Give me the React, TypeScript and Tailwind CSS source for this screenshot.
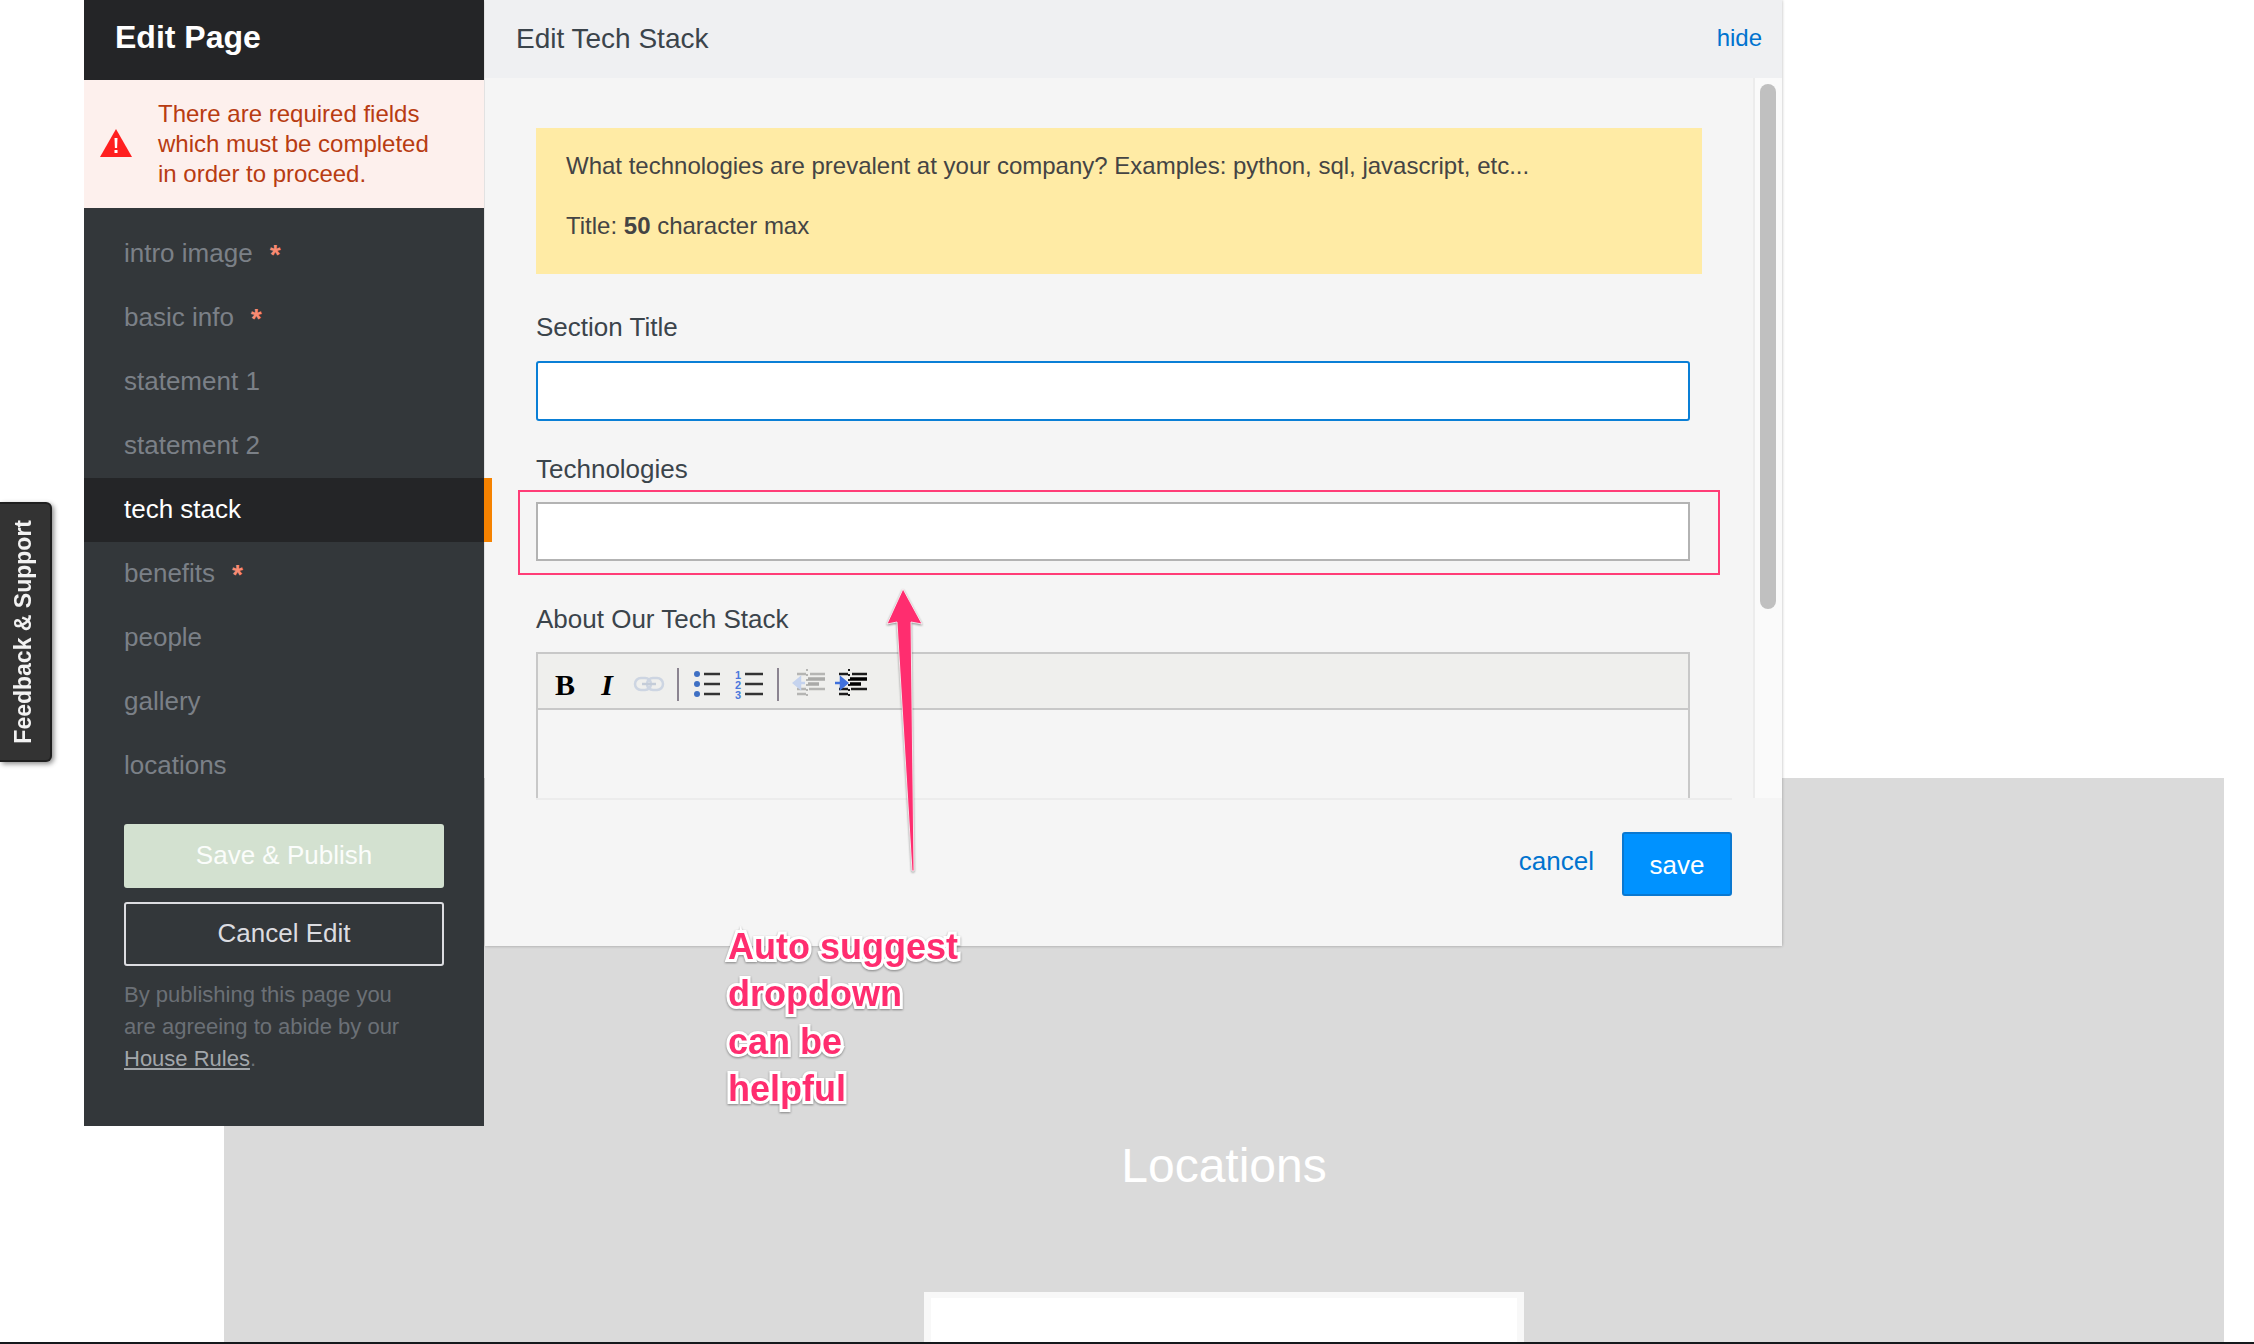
const navItems = [
  { label: "intro image", required: true },
  { label: "basic info", required: true },
  { label: "statement 1" },
  { label: "statement 2" },
  { label: "tech stack", active: true },
  { label: "benefits", required: true },
  { label: "people" },
  { label: "gallery" },
  { label: "locations" },
];

function LinkIcon() {
  return (
    <svg width="32" height="16" viewBox="0 0 32 16" fill="none" stroke="#cdd5e2" strokeWidth="2.5">
      <rect x="2" y="2" width="16" height="12" rx="6" />
      <rect x="14" y="2" width="16" height="12" rx="6" />
      <path d="M9 8h14" stroke="#c4ccd8" />
    </svg>
  );
}

function BulletIcon() {
  return (
    <svg width="28" height="30" viewBox="0 0 28 30">
      {[5, 15, 25].map((y) => (
        <g key={y}>
          <circle cx="4" cy={y} r="3" fill="#3f70c4" />
          <path d={`M11 ${y}h16`} stroke="#333" strokeWidth="2.5" />
        </g>
      ))}
    </svg>
  );
}

function NumberIcon() {
  return (
    <svg width="30" height="32" viewBox="0 0 30 32">
      {[1, 2, 3].map((n) => (
        <g key={n}>
          <text x="1" y={n * 10 + 1} fontSize="11" fontWeight="700" fontFamily="Liberation Sans" fill="#4a78dc">
            {n}
          </text>
          <path d={`M11 ${n * 10 - 4}h18`} stroke="#333" strokeWidth="2.5" />
        </g>
      ))}
    </svg>
  );
}

function IndentIcon({ outdent }: { outdent?: boolean }) {
  const dark = outdent ? "#b5b5b3" : "#1c1c1c";
  const thick = outdent ? "#aaaaa8" : "#000000";
  const arrow = outdent ? "#c5d3ee" : "#3f70dc";
  return (
    <svg width="34" height="32" viewBox="0 0 34 32">
      <path d="M15 1v30" stroke={dark} strokeWidth="2" strokeDasharray="2 3" />
      <path d="M5 6h9M18 6h15M5 26h9M5 21h9" stroke={dark} strokeWidth="2.5" />
      <path d="M16 11h17M16 16h11" stroke={thick} strokeWidth="3.5" />
      <path d="M17 21h16" stroke={dark} strokeWidth="2.5" />
      {outdent ? (
        <path d="M13 15H4M8 10l-6 5 6 5z" stroke={arrow} strokeWidth="2.5" fill={arrow} />
      ) : (
        <path d="M1 15h8M7 10l6 5-6 5z" stroke={arrow} strokeWidth="2.5" fill={arrow} />
      )}
    </svg>
  );
}

function ToolbarSeparator() {
  return (
    <div className="flex w-[16px] justify-center pt-[6px]">
      <div className="h-[33px] w-[2px] bg-[#8b8490]" />
    </div>
  );
}

function Toolbar() {
  const cell = "flex h-[54px] w-[42px] items-center justify-center pt-[6px]";
  return (
    <div className="flex h-[56px] items-center border-b-2 border-[#c8c8c8] bg-[#efefed] pl-[6px]">
      <div className={`${cell} font-['Liberation_Serif',serif] text-[30px] font-bold text-black`}>B</div>
      <div className={`${cell} font-['Liberation_Serif',serif] text-[30px] font-bold text-black italic`}>I</div>
      <div className={cell}>
        <LinkIcon />
      </div>
      <ToolbarSeparator />
      <div className={cell}>
        <BulletIcon />
      </div>
      <div className={cell}>
        <NumberIcon />
      </div>
      <ToolbarSeparator />
      <div className={`${cell} ml-[2px]`}>
        <IndentIcon outdent />
      </div>
      <div className={cell}>
        <IndentIcon />
      </div>
    </div>
  );
}

function Sidebar() {
  return (
    <aside className="absolute top-0 left-[84px] z-20 h-[1126px] w-[400px] bg-[#33373a]">
      <div className="flex h-[80px] items-center bg-[#242527] pb-[6px] pl-[31px] text-[32px] font-bold text-white">
        Edit Page
      </div>
      <div className="flex h-[128px] items-center bg-[#fdf0ed] pl-[16px]">
        <svg width="32" height="28" viewBox="0 0 32 28" className="-mt-[3px] shrink-0">
          <path d="M16 0l16 28H0z" fill="#ff2020" />
          <path d="M14.5 9h3l-.4 10h-2.2zM14.5 21h3v3h-3z" fill="#fff" />
        </svg>
        <p className="ml-[26px] text-[24px] leading-[30px] text-[#b83c12]">
          There are required fields
          <br />
          which must be completed
          <br />
          in order to proceed.
        </p>
      </div>
      <nav className="pt-[14px]">
        {navItems.map((item) => (
          <div
            key={item.label}
            className={`relative flex h-[64px] items-center pb-[2px] pl-[40px] text-[26px] ${
              item.active ? "bg-[#242527] text-white" : "text-[#7b8087]"
            }`}
          >
            {item.label}
            {item.required && (
              <span className="-mt-[3px] ml-[17px] h-[22px] text-[28px] leading-[28px] font-bold text-[#f98a72]">*</span>
            )}
            {item.active && <div className="absolute top-0 -right-[8px] h-full w-[8px] bg-[#f58200]" />}
          </div>
        ))}
      </nav>
      <div className="mt-[26px] px-[40px]">
        <button className="flex h-[64px] w-[320px] items-center justify-center rounded-[3px] bg-[#d3e1d0] pb-[2px] text-[26px] text-[#fbfdfb]">
          Save &amp; Publish
        </button>
        <button className="mt-[14px] flex h-[64px] w-[320px] items-center justify-center rounded-[3px] border-2 border-[#dcdce0] pb-[2px] text-[26px] text-[#dcdce0]">
          Cancel Edit
        </button>
        <p className="mt-[13px] text-[22px] leading-[32px] text-[#6b7076]">
          By publishing this page you
          <br />
          are agreeing to abide by our
          <br />
          <span className="text-[#a2a6aa] underline">House Rules</span>.
        </p>
      </div>
    </aside>
  );
}

function Modal() {
  const label = "text-[26px] leading-[30px] text-[#3b444b]";
  return (
    <section className="absolute top-0 left-[485px] z-10 flex h-[946px] w-[1297px] flex-col bg-[#f5f5f5] shadow-[0_0_3px_rgba(0,0,0,0.3)]">
      <header className="flex h-[78px] shrink-0 items-center justify-between bg-[#eff0f2] pr-[20px] pl-[31px]">
        <h2 className="text-[28px] text-[#3b444b]">Edit Tech Stack</h2>
        <a className="pb-[2px] text-[24px] text-[#0073cf]">hide</a>
      </header>

      <div className="flex h-[720px] shrink-0">
        <div className="w-[1268px] overflow-hidden pl-[51px]">
          <div className="mt-[50px] h-[146px] w-[1166px] bg-[#ffeba5] pt-[23px] pl-[30px] text-[24px] leading-[30px] text-[#444444]">
            <p>What technologies are prevalent at your company? Examples: python, sql, javascript, etc...</p>
            <p className="mt-[30px]">
              Title: <b>50</b> character max
            </p>
          </div>

          <div className={`mt-[38px] ${label}`}>Section Title</div>
          <input className="mt-[19px] block h-[60px] w-[1154px] rounded-[3px] border-2 border-[#0a7fd6] bg-white" />

          <div className={`mt-[33px] ${label}`}>Technologies</div>
          <div className="relative mt-[18px] w-[1154px]">
            <input className="block h-[59px] w-full border-2 border-[#b3b3b3] bg-white" />
            <div className="absolute -top-[12px] -left-[18px] h-[85px] w-[1202px] border-2 border-[#ff3d77]" />
          </div>

          <div className={`mt-[43px] ${label}`}>About Our Tech Stack</div>
          <div className="mt-[18px] h-[300px] w-[1154px] border-2 border-[#c8c8c8]">
            <Toolbar />
          </div>
        </div>
        <div className="flex-1 border-l-2 border-[#ececec] bg-[#fafafa] pt-[6px] pl-[5px]">
          <div className="h-[525px] w-[16px] rounded-full bg-[#c0c0c0]" />
        </div>
      </div>

      <footer className="mr-[50px] ml-[51px] flex flex-1 items-start justify-end border-t-2 border-[#ececec]">
        <a className="mt-[43px] mr-[28px] text-[26px] leading-[36px] text-[#0073cf]">cancel</a>
        <button className="mt-[32px] h-[64px] w-[110px] rounded-[3px] border-2 border-[#0a78d0] bg-[#0092ff] pt-[2px] text-[26px] font-medium text-white">
          save
        </button>
      </footer>
    </section>
  );
}

function Annotation() {
  return (
    <>
      <svg
        className="absolute top-[580px] left-[880px] z-30 drop-shadow-[0_1px_1px_rgba(0,0,0,0.45)]"
        width="50"
        height="300"
        viewBox="880 580 50 300"
      >
        <path
          d="M903 589L922 624L911 622L914 871L912 871L897 622L887 624Z"
          fill="#ff2d6f"
          stroke="#ffffff"
          strokeWidth="0.8"
        />
      </svg>
      <div className="absolute top-[923px] left-[728px] z-30 text-[36px] leading-[47.4px] font-bold text-[#ff2d6f] [paint-order:stroke_fill] drop-shadow-[0_1px_1px_rgba(0,0,0,0.4)] [-webkit-text-stroke:6px_white]">
        Auto suggest
        <br />
        dropdown
        <br />
        can be
        <br />
        helpful
      </div>
    </>
  );
}

export default function App() {
  return (
    <div className="relative h-[1344px] w-full overflow-hidden bg-white pt-[778px] pl-[224px] font-['Liberation_Sans',Arial,sans-serif]">
      <main className="flex h-[564px] w-[2000px] flex-col items-center bg-[#dadada]">
        <h1 className="mt-[360px] text-[48px] leading-[56px] text-white">Locations</h1>
        <div className="mt-[98px] flex-1 self-center">
          <div className="h-full w-[600px] border-x-[7px] border-t-[6px] border-[#f8f8f8] bg-white" />
        </div>
      </main>
      <div className="absolute bottom-0 left-0 h-[2px] w-full bg-[#15191c]" />

      <div className="absolute top-[502px] left-0 z-20 flex h-[260px] w-[52px] items-center justify-center rounded-r-[6px] border-2 border-l-0 border-[#1f1f1f] bg-[#333333] pr-[3px] shadow-[2px_2px_5px_rgba(0,0,0,0.45)]">
        <span className="rotate-180 text-[23px] font-bold whitespace-nowrap text-[#f2f2f2] [writing-mode:vertical-rl]">
          Feedback &amp; Support
        </span>
      </div>

      <Sidebar />
      <Modal />
      <Annotation />
    </div>
  );
}
